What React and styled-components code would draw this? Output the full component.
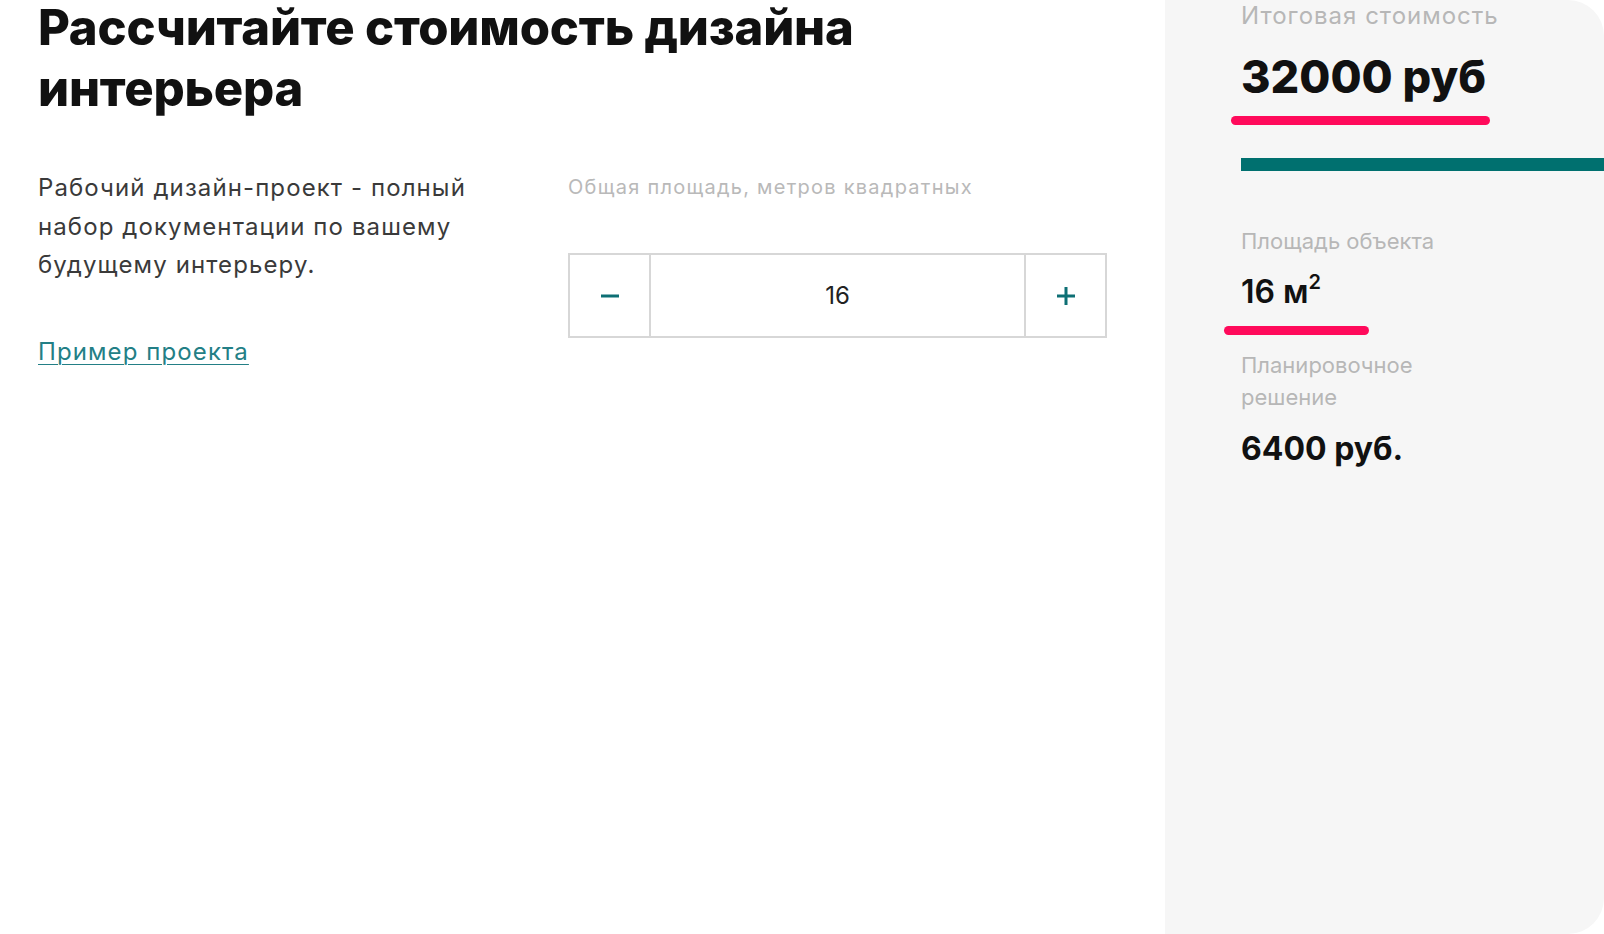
import React, { useState } from "react";
import styled, { createGlobalStyle } from "styled-components";

const GlobalStyle = createGlobalStyle`
  html, body {
    margin: 0;
    padding: 0;
    background: #ffffff;
    font-family: Inter, "Noto Sans", sans-serif;
  }
  #root {
    min-height: 934px;
  }
`;

const Page = styled.div`
  display: flex;
  width: 1604px;
  height: 934px;
  overflow: hidden;
  background: #ffffff;
`;

const Main = styled.div`
  flex: 1;
  padding: 0 58px 0 38px;
  display: flex;
  flex-direction: column;
`;

const Title = styled.h1`
  margin: -3px 0 0;
  font-size: 49px;
  line-height: 61px;
  font-weight: 800;
  color: #111111;
  letter-spacing: -0.2px;
`;

const Columns = styled.div`
  display: flex;
  margin-top: 50px;
`;

const InfoCol = styled.div`
  width: 530px;
  display: flex;
  flex-direction: column;
  align-items: flex-start;
`;

const Description = styled.p`
  margin: 0;
  width: 460px;
  font-size: 24px;
  line-height: 38.5px;
  letter-spacing: 1.1px;
  color: #3a3a3a;
`;

const SampleLink = styled.a`
  margin-top: 48px;
  font-size: 24px;
  line-height: 38px;
  letter-spacing: 1.1px;
  color: #237f86;
  text-decoration: underline;
  text-underline-offset: 4px;
  text-decoration-thickness: 1px;
  cursor: pointer;
`;

const CalcCol = styled.div`
  flex: 1;
  display: flex;
  flex-direction: column;
`;

const FieldLabel = styled.div`
  font-size: 20px;
  line-height: 26px;
  letter-spacing: 1.25px;
  margin-top: 5px;
  color: #b9b9b9;
`;

const Stepper = styled.div`
  margin-top: 53px;
  display: flex;
  height: 85px;
  border: 2px solid #d7d7d7;
  box-sizing: border-box;
`;

const StepButton = styled.button`
  width: 81px;
  flex: none;
  border: none;
  background: #ffffff;
  display: flex;
  align-items: center;
  justify-content: center;
  cursor: pointer;
  padding: 0;
  ${(p) => (p.$side === "left" ? "border-right: 2px solid #d7d7d7;" : "border-left: 2px solid #d7d7d7;")}
`;

const StepValue = styled.div`
  flex: 1;
  display: flex;
  align-items: center;
  justify-content: center;
  font-size: 24px;
  color: #222222;
`;

const Sidebar = styled.aside`
  width: 439px;
  flex: none;
  background: #f6f6f6;
  border-radius: 0 36px 36px 0;
  padding: 0 0 0 76px;
  box-sizing: border-box;
  display: flex;
  flex-direction: column;
  align-items: flex-start;
`;

const SideLabel = styled.div`
  font-size: ${(p) => p.$size || 22}px;
  line-height: 32px;
  letter-spacing: ${(p) => p.$spacing || 0}px;
  color: #b7b7b7;
  margin-top: ${(p) => p.$top || 0}px;
  width: ${(p) => p.$width || "auto"};
`;

const TotalPrice = styled.div`
  margin-top: 19px;
  font-size: 45px;
  line-height: 52px;
  font-weight: 800;
  color: #111111;
`;

const Underline = styled.div`
  height: 9px;
  border-radius: 5px;
  background: #ff0a5b;
  width: ${(p) => p.$width}px;
  margin-left: ${(p) => p.$shift}px;
  margin-top: ${(p) => p.$top}px;
`;

const TealBar = styled.div`
  align-self: stretch;
  height: 13px;
  background: #00706f;
  margin-top: 33px;
`;

const SideValue = styled.div`
  margin-top: ${(p) => p.$top || 0}px;
  font-size: 32px;
  line-height: 40px;
  font-weight: ${(p) => p.$weight || 600};
  color: #111111;
  sup {
    font-size: 20px;
    line-height: 0;
    vertical-align: 14px;
  }
`;

function MinusIcon() {
  return (
    <svg width="22" height="22" viewBox="0 0 22 22">
      <path d="M2 11h18" stroke="#0d6f74" strokeWidth="3" />
    </svg>
  );
}

function PlusIcon() {
  return (
    <svg width="22" height="22" viewBox="0 0 22 22">
      <path d="M2 11h18M11 2v18" stroke="#0d6f74" strokeWidth="3" />
    </svg>
  );
}

export default function App() {
  const [area, setArea] = useState(16);
  const price = area * 2000;
  const layout = area * 400;

  return (
    <Page>
      <GlobalStyle />
      <Main>
        <Title>
          Рассчитайте стоимость дизайна
          <br />
          интерьера
        </Title>
        <Columns>
          <InfoCol>
            <Description>
              Рабочий дизайн-проект - полный набор документации по вашему
              будущему интерьеру.
            </Description>
            <SampleLink>Пример проекта</SampleLink>
          </InfoCol>
          <CalcCol>
            <FieldLabel>Общая площадь, метров квадратных</FieldLabel>
            <Stepper>
              <StepButton $side="left" onClick={() => setArea((a) => Math.max(1, a - 1))}>
                <MinusIcon />
              </StepButton>
              <StepValue>{area}</StepValue>
              <StepButton $side="right" onClick={() => setArea((a) => a + 1)}>
                <PlusIcon />
              </StepButton>
            </Stepper>
          </CalcCol>
        </Columns>
      </Main>
      <Sidebar>
        <SideLabel $size={24} $spacing={1}>Итоговая стоимость</SideLabel>
        <TotalPrice>{price} руб</TotalPrice>
        <Underline $width={259} $shift={-10} $top={13} />
        <TealBar />
        <SideLabel $top={54}>Площадь объекта</SideLabel>
        <SideValue $top={15}>
          {area} м<sup>2</sup>
        </SideValue>
        <Underline $width={145} $shift={-17} $top={14} />
        <SideLabel $top={14} $width="210px">
          Планировочное решение
        </SideLabel>
        <SideValue $top={16} $weight={700}>
          {layout} руб.
        </SideValue>
      </Sidebar>
    </Page>
  );
}
